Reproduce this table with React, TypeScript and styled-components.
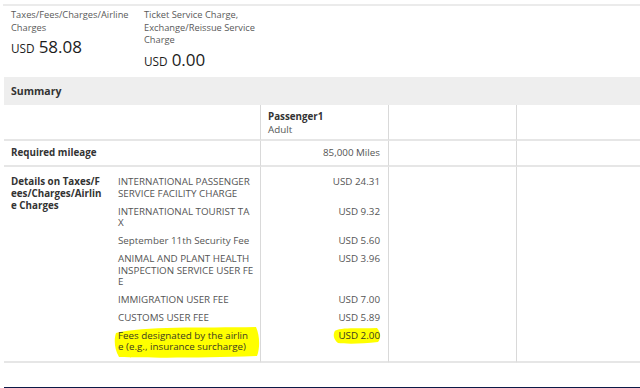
import React from "react";
import styled, { createGlobalStyle } from "styled-components";

const Global = createGlobalStyle`
  html, body { margin: 0; padding: 0; background: #fff; }
  body {
    font-family: "Open Sans", "Noto Sans", "DejaVu Sans", sans-serif;
    color: #555;
    overflow: hidden;
  }
`;

const Page = styled.div`
  width: 640px;
  height: 388px;
  overflow: hidden;
  padding-top: 4px;
  box-sizing: border-box;
`;

const Totals = styled.section`
  margin-left: 3px;
  border-top: 2px solid #ebebeb;
  height: 73px;
  box-sizing: border-box;
  padding: 3px 0 0 8px;
  display: flex;
`;

const TotalBlock = styled.div`
  width: 133px;
`;

const TotalLabel = styled.div`
  font-size: 9.3px;
  line-height: 12.5px;
  color: #5a5a5a;
  white-space: nowrap;
`;

const TotalAmount = styled.div`
  margin-top: 3px;
  color: #1c1c1c;
  line-height: 20px;
  white-space: nowrap;
`;

const Currency = styled.span`
  font-size: 11.8px;
  margin-right: 4px;
`;

const Figure = styled.span`
  font-size: 17px;
`;

const SummaryHead = styled.h2`
  margin: 0 0 0 4px;
  height: 28px;
  background: #eeeeee;
  padding-left: 7px;
  font-size: 10.5px;
  font-weight: 700;
  line-height: 28px;
  color: #333;
`;

const Table = styled.div`
  margin-left: 4px;
  display: grid;
  grid-template-columns: 107px 149px 128px 128px 1fr;
`;

const Cell = styled.div<{ $span?: number; $rows?: number; $line?: boolean; $divider?: boolean; $right?: boolean }>`
  grid-column: span ${(p) => p.$span ?? 1};
  ${(p) => (p.$rows ? `grid-row: span ${p.$rows};` : "")}
  border-left: ${(p) => (p.$divider ? "1px solid #d9d9d9" : "none")};
  border-bottom: ${(p) => (p.$line ? "2px solid #e6e6e6" : "none")};
  text-align: ${(p) => (p.$right ? "right" : "left")};
  box-sizing: border-box;
  font-size: 9.8px;
  color: #555;
`;

const HeadCell = styled(Cell)`
  height: 36px;
  padding: 5px 8px 0 7px;
  line-height: 13px;
`;

const PassengerName = styled.div`
  font-weight: 700;
  color: #333;
`;

const MileCell = styled(Cell)`
  height: 26px;
  padding: 0 8px 0 7px;
  line-height: 24px;
`;

const RowLabel = styled.div`
  font-weight: 700;
  color: #333;
  white-space: nowrap;
  font-size: 9.8px;
`;

const DetailLabel = styled(Cell)`
  padding: 9px 0 0 7px;
  line-height: 12px;
`;

const ItemCell = styled(Cell)<{ $first?: boolean; $last?: boolean }>`
  padding: ${(p) => (p.$first ? "9px" : "6px")} 8px ${(p) => (p.$last ? "8px" : "0")} 7px;
  line-height: 11.75px;
  white-space: nowrap;
  position: relative;
`;

const Marked = styled.span`
  position: relative;
  display: inline-block;
  color: #3a3a20;
`;

const MarkerInk = styled.svg`
  position: absolute;
  z-index: 0;
  pointer-events: none;
`;

const MarkedText = styled.span`
  position: relative;
  z-index: 1;
`;

const NavyRule = styled.div`
  margin: 24px 0 0 4px;
  height: 4px;
  background: #0c1a47;
`;

type Fee = { lines: string[]; amount: string; marked?: boolean };

const fees: Fee[] = [
  { lines: ["INTERNATIONAL PASSENGER", "SERVICE FACILITY CHARGE"], amount: "USD 24.31" },
  { lines: ["INTERNATIONAL TOURIST TA", "X"], amount: "USD 9.32" },
  { lines: ["September 11th Security Fee"], amount: "USD 5.60" },
  { lines: ["ANIMAL AND PLANT HEALTH", "INSPECTION SERVICE USER FE", "E"], amount: "USD 3.96" },
  { lines: ["IMMIGRATION USER FEE"], amount: "USD 7.00" },
  { lines: ["CUSTOMS USER FEE"], amount: "USD 5.89" },
  { lines: ["Fees designated by the airlin", "e (e.g., insurance surcharge)"], amount: "USD 2.00", marked: true },
];

function Highlight({ children, w, h, dx, dy }: { children: React.ReactNode; w: number; h: number; dx: number; dy: number }) {
  // hand-drawn marker stroke behind the text
  const d = `M2 ${h * 0.22} C ${w * 0.2} 0, ${w * 0.6} 2, ${w - 4} 1 C ${w} ${h * 0.3}, ${w} ${h * 0.7}, ${w - 3} ${h - 2} C ${w * 0.6} ${h}, ${w * 0.25} ${h}, 5 ${h - 1} C 0 ${h * 0.7}, 0 ${h * 0.4}, 2 ${h * 0.22} Z`;
  return (
    <Marked>
      <MarkerInk width={w} height={h} viewBox={`0 0 ${w} ${h}`} style={{ left: dx, top: dy }}>
        <path d={d} fill="#ffff00" />
      </MarkerInk>
      <MarkedText>{children}</MarkedText>
    </Marked>
  );
}

export default function App() {
  return (
    <Page>
      <Global />
      <Totals>
        <TotalBlock>
          <TotalLabel>Taxes/Fees/Charges/Airline</TotalLabel>
          <TotalLabel>Charges</TotalLabel>
          <TotalAmount>
            <Currency>USD</Currency>
            <Figure>58.08</Figure>
          </TotalAmount>
        </TotalBlock>
        <TotalBlock>
          <TotalLabel>Ticket Service Charge,</TotalLabel>
          <TotalLabel>Exchange/Reissue Service</TotalLabel>
          <TotalLabel>Charge</TotalLabel>
          <TotalAmount>
            <Currency>USD</Currency>
            <Figure>0.00</Figure>
          </TotalAmount>
        </TotalBlock>
      </Totals>

      <SummaryHead>Summary</SummaryHead>

      <Table>
        <HeadCell $span={2} $line />
        <HeadCell $line $divider>
          <PassengerName>Passenger1</PassengerName>
          <div>Adult</div>
        </HeadCell>
        <HeadCell $line $divider />
        <HeadCell $line $divider />

        <MileCell $span={2} $line>
          <RowLabel>Required mileage</RowLabel>
        </MileCell>
        <MileCell $line $divider $right>85,000 Miles</MileCell>
        <MileCell $line $divider />
        <MileCell $line $divider />

        <DetailLabel $rows={fees.length} $line>
          <RowLabel>Details on Taxes/F</RowLabel>
          <RowLabel>ees/Charges/Airlin</RowLabel>
          <RowLabel>e Charges</RowLabel>
        </DetailLabel>
        {fees.map((fee, i) => {
          const first = i === 0;
          const last = i === fees.length - 1;
          return (
            <React.Fragment key={fee.amount + i}>
              <ItemCell $first={first} $last={last} $line={last}>
                {fee.marked ? (
                  <Highlight w={146} h={32} dx={-4} dy={-4}>
                    {fee.lines.map((l) => (
                      <div key={l}>{l}</div>
                    ))}
                  </Highlight>
                ) : (
                  fee.lines.map((l) => <div key={l}>{l}</div>)
                )}
              </ItemCell>
              <ItemCell $first={first} $last={last} $line={last} $divider $right>
                {fee.marked ? (
                  <Highlight w={48} h={17} dx={-5} dy={-3}>
                    {fee.amount}
                  </Highlight>
                ) : (
                  fee.amount
                )}
              </ItemCell>
              <ItemCell $first={first} $last={last} $line={last} $divider />
              <ItemCell $first={first} $last={last} $line={last} $divider />
            </React.Fragment>
          );
        })}
      </Table>

      <NavyRule />
    </Page>
  );
}
